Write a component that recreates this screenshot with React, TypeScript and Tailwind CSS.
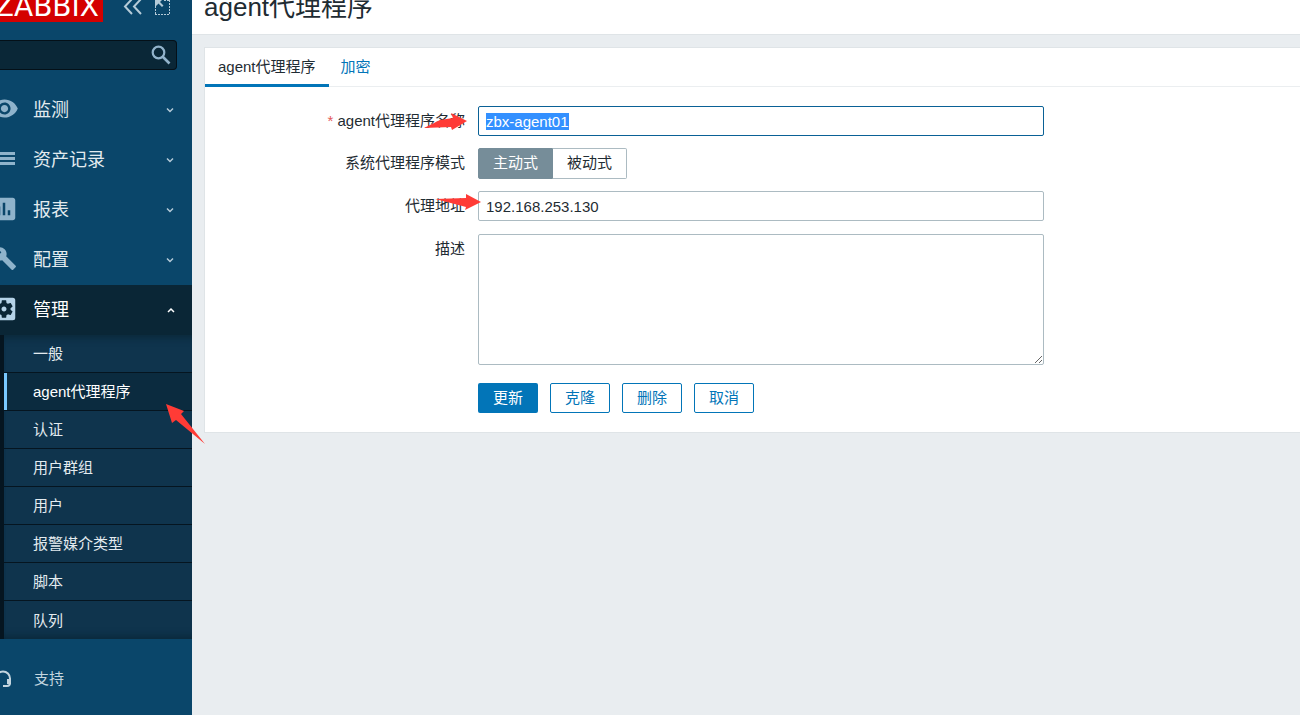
import { useEffect, useRef, useState } from "react";
import { MdAssessment, MdBuild, MdSettingsApplications, MdVisibility } from "react-icons/md";

function ListIcon() {
  return (
    <svg width="30" height="30" viewBox="0 0 30 30" fill="currentColor">
      <path d="M4 8H26V11H4ZM4 13H26V16H4ZM4 18H26V21H4Z" />
    </svg>
  );
}

function Chevron({ up = false }: { up?: boolean }) {
  return (
    <svg width="10" height="10" viewBox="0 0 10 10" fill="none" stroke="currentColor" strokeWidth="1.500">
      <path d={up ? "M2 7L5 4L8 7" : "M2 3.500L5 6.500L8 3.500"} />
    </svg>
  );
}

const menu = [
  { label: "监测", icon: <MdVisibility size={29} /> },
  { label: "资产记录", icon: <ListIcon /> },
  { label: "报表", icon: <MdAssessment size={30} /> },
  { label: "配置", icon: <MdBuild size={25} /> },
];

const subMenu = ["一般", "agent代理程序", "认证", "用户群组", "用户", "报警媒介类型", "脚本", "队列"];

const iconClass = "-ml-[11px] mr-[14px] flex w-[30px] shrink-0 justify-center pb-[3px]";

const fieldClass =
  "w-full max-w-[566px] rounded-xs border border-[#acbbc2] bg-white px-[7px] text-[15px] text-[#1f2c33] outline-none focus:border-[#0a6196] selection:bg-[#3390ff] selection:text-white";

const labelClass = "relative w-[261px] shrink-0 pr-px text-right leading-[30px]";

const segmentClass =
  "flex cursor-pointer items-center justify-center border border-[#acbbc2] px-[14px] has-checked:border-[#768d99] has-checked:bg-[#768d99] has-checked:text-white";

const outlineButton =
  "h-[30px] w-[60px] cursor-pointer rounded-xs border border-[#0275b8] bg-white pt-px text-[#0275b8]";

function Sidebar() {
  return (
    <aside className="w-[192px] shrink-0 bg-[#0a466a] text-[#e3ebef]">
      <div className="flex h-[22px] items-start">
        <a
          href="#"
          className="flex h-[22px] w-[103px] justify-end overflow-hidden bg-[#d40000] pr-1 font-['DejaVu_Sans'] text-[28px] leading-[14px] text-white"
        >
          ZABBIX
        </a>
        <button aria-label="Collapse" className="ml-5 cursor-pointer">
          <svg width="20" height="15" viewBox="0 0 20 15" fill="none" stroke="#b5cbd8" strokeWidth="2">
            <path d="M9 -1L2 6.500L9 14M18 -1L11 6.500L18 14" />
          </svg>
        </button>
        <button aria-label="Hide" className="ml-3 cursor-pointer">
          <svg width="16" height="15" viewBox="0 0 16 15" fill="none" stroke="#b5cbd8" strokeWidth="1">
            <path d="M0.500 6V14.500M0 14.500H15M14.500 14V0M9 0.500H15" strokeDasharray="2 1" />
            <path d="M0 0H7L5 2L8.500 5.500L7 7L3.500 3.500L0 7Z" fill="#b5cbd8" stroke="none" />
          </svg>
        </button>
      </div>
      <div className="mt-[18px] mr-[15px] flex h-[30px] items-center rounded-r border border-l-0 border-[#041018] bg-[#0a2737] pr-[5px]">
        <input aria-label="Search" className="w-full min-w-0 flex-1 bg-transparent px-2 outline-none" />
        <button aria-label="Search" className="cursor-pointer">
          <svg width="20" height="20" viewBox="0 0 20 20" fill="none" stroke="#92b3cb" strokeWidth="2.200">
            <circle cx="7.500" cy="7.500" r="5.800" />
            <path d="M11.500 11.500L18.500 18.500" strokeWidth="2.600" />
          </svg>
        </button>
      </div>
      <nav className="mt-[15px]">
        {menu.map(({ label, icon }) => (
          <a key={label} href="#" className="flex h-[50px] items-center pr-[17px] text-[18px]">
            <span className={`${iconClass} text-[#8fb3cb]`}>{icon}</span>
            <span className="flex-1">{label}</span>
            <span className="text-[#b5cbd8]">
              <Chevron />
            </span>
          </a>
        ))}
        <a href="#" className="flex h-[50px] items-center bg-[#0a2636] pr-4 text-[18px] text-white">
          <span className={`${iconClass} text-[#b5d3e8]`}>
            <MdSettingsApplications size={30} />
          </span>
          <span className="flex-1">管理</span>
          <Chevron up />
        </a>
        <ul className="border-l-4 border-[#051520] bg-[#0f344d] shadow-[inset_0_10px_8px_-8px_#0a2636,inset_0_-10px_8px_-8px_#0a2636]">
          {subMenu.map((item) => (
            <li key={item} className="relative h-[38px] border-b border-[#051520] last:border-b-0">
              {item === "agent代理程序" ? (
                <>
                  <a href="#" className="flex h-full items-center border-l-3 border-[#78c8ff] bg-[#0b2b3f] pt-[2px] pl-[26px] text-white">
                    {item}
                  </a>
                  <svg className="pointer-events-none absolute top-[30px] left-[161px] z-10" width="41" height="42" viewBox="0 0 41 42">
                    <path d="M1 1L19 8L16 11L40 41L11 17L7 20Z" fill="#ff3b36" />
                  </svg>
                </>
              ) : (
                <a href="#" className="flex h-full items-center pt-[2px] pl-[29px]">
                  {item}
                </a>
              )}
            </li>
          ))}
        </ul>
      </nav>
      <a href="#" className="mt-[19px] flex h-[42px] items-center text-[#c3d5df]">
        <svg className="-ml-[6px] mr-[22px] shrink-0" width="18" height="18" viewBox="0 0 18 18" fill="none" stroke="currentColor" strokeWidth="2">
          <path d="M2 12V8.500A7 7 0 0 1 16 8.500V13Q16 16 13 16H9" />
          <path d="M1 9H5V14H1ZM13 9H17V14H13Z" fill="currentColor" stroke="none" />
        </svg>
        支持
      </a>
    </aside>
  );
}

export default function App() {
  const nameRef = useRef<HTMLInputElement | null>(null);
  const [name, setName] = useState("zbx-agent01");
  const [address, setAddress] = useState("192.168.253.130");
  const [mode, setMode] = useState("active");

  useEffect(() => {
    nameRef.current?.focus();
    nameRef.current?.select();
  }, []);

  return (
    <div className="flex min-h-screen bg-[#e9edf0] font-['Liberation_Sans','Noto_Sans_CJK_SC',sans-serif] text-[15px] text-[#1f2c33]">
      <Sidebar />
      <main className="min-w-0 flex-1">
        <header className="h-[35px] border-b border-[#dfe4e7] bg-white pl-3">
          <h1 className="text-[26px] leading-[14px]">agent代理程序</h1>
        </header>
        <section className="mt-3 ml-3 border border-r-0 border-[#dfe4e7] bg-white">
          <div className="flex h-[39px] border-b border-[#ebeef0]">
            <button className="h-[39px] cursor-pointer border-b-3 border-[#0275b8] px-[13px] pt-[3px]">agent代理程序</button>
            <button className="h-[39px] cursor-pointer px-3 text-[#0275b8]">加密</button>
          </div>
          <form className="flex flex-col pt-[19px] pb-[19px]" onSubmit={(e) => e.preventDefault()}>
            <div className="flex gap-3">
              <label htmlFor="name" className={labelClass}>
                <span className="mr-1 text-[#e45959]">*</span>
                agent代理程序名称
                <svg className="pointer-events-none absolute top-[7px] left-[219px]" width="44" height="18" viewBox="0 0 44 18">
                  <path d="M0 15L16 7L29 5L27 0L43 8L28 17L27 14Z" fill="#ff3b36" />
                </svg>
              </label>
              <input
                id="name"
                ref={nameRef}
                className={`${fieldClass} h-[30px]`}
                value={name}
                onChange={(e) => setName(e.target.value)}
              />
            </div>
            <div role="radiogroup" aria-labelledby="mode-label" className="mt-3 flex gap-3">
              <span id="mode-label" className={labelClass}>
                系统代理程序模式
              </span>
              <div className="flex h-[31px]">
                <label className={`${segmentClass} rounded-l-xs`}>
                  <input type="radio" name="mode" className="absolute appearance-none" checked={mode === "active"} onChange={() => setMode("active")} />
                  主动式
                </label>
                <label className={`${segmentClass} rounded-r-xs border-l-0`}>
                  <input type="radio" name="mode" className="absolute appearance-none" checked={mode === "passive"} onChange={() => setMode("passive")} />
                  被动式
                </label>
              </div>
            </div>
            <div className="mt-3 flex gap-3">
              <label htmlFor="address" className={labelClass}>
                代理地址
                <svg className="pointer-events-none absolute top-[2px] left-[230px] z-10" width="48" height="18" viewBox="0 0 48 18">
                  <path d="M0 6L31 5L31 1L46 9L30 17L31 14L12 9Z" fill="#ff3b36" />
                </svg>
              </label>
              <input
                id="address"
                className={`${fieldClass} h-[30px]`}
                value={address}
                onChange={(e) => setAddress(e.target.value)}
              />
            </div>
            <div className="mt-[13px] flex gap-3">
              <label htmlFor="description" className={labelClass}>
                描述
              </label>
              <textarea id="description" className={`${fieldClass} h-[131px]`} />
            </div>
            <div className="mt-[18px] ml-[273px] flex gap-3">
              <button type="submit" className="h-[30px] w-[60px] cursor-pointer rounded-xs bg-[#0275b8] pt-px text-white">
                更新
              </button>
              <button type="button" className={outlineButton}>
                克隆
              </button>
              <button type="button" className={outlineButton}>
                删除
              </button>
              <button type="button" className={outlineButton}>
                取消
              </button>
            </div>
          </form>
        </section>
      </main>
    </div>
  );
}
